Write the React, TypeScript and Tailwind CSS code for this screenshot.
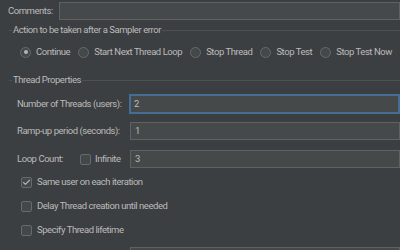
import { Check } from 'lucide-react';

const font = { fontFamily: 'Roboto, "Liberation Sans", sans-serif', letterSpacing: '-0.45px' };

function Radio({ label, checked = false }: { label: string; checked?: boolean }) {
  return (
    <div className="flex items-center gap-[5px] shrink-0">
      <span className="w-[11px] h-[11px] rounded-full border border-[#666a6c] bg-[#43494a] flex items-center justify-center">
        {checked && <span className="w-[4px] h-[4px] rounded-full bg-[#b4b4b4]" />}
      </span>
      <span className="whitespace-nowrap">{label}</span>
    </div>
  );
}

function CheckRow({ label, checked = false }: { label: string; checked?: boolean }) {
  return (
    <div className="flex items-center gap-[5px] h-[24px] pl-[21px]">
      <span className="w-[11px] h-[11px] rounded-[2px] border border-[#666a6c] bg-[#43494a] flex items-center justify-center">
        {checked && <Check size={9} strokeWidth={3} className="text-[#b4b4b4]" />}
      </span>
      <span className="whitespace-nowrap">{label}</span>
    </div>
  );
}

function Field({ value, focused = false }: { value: string; focused?: boolean }) {
  return (
    <div
      className={
        focused
          ? 'flex-1 h-[20px] bg-[#45494a] border-2 border-[#466d94] flex items-center pl-[3px]'
          : 'flex-1 h-[18px] bg-[#45494a] border border-[#5e6263] flex items-center pl-[4px]'
      }
    >
      {value}
    </div>
  );
}

function Titled({ title }: { title: string }) {
  return (
    <div className="flex items-center h-[12px] pl-[9px]">
      <span className="w-[3px] h-px bg-[#4d5153]" />
      <span className="px-px whitespace-nowrap">{title}</span>
      <span className="flex-1 h-px bg-[#4d5153]" />
    </div>
  );
}

export default function App() {
  return (
    <div className="w-[400px] h-[250px] overflow-hidden bg-[#3c3f41] text-[#bbbbbb] text-[9.5px] leading-none" style={font}>
      {/* Comments */}
      <div className="flex items-center pt-[2px] pl-[8px]">
        <span className="w-[51px] shrink-0 whitespace-nowrap">Comments:</span>
        <Field value="" />
      </div>

      {/* Action after error */}
      <div className="mt-[4px]">
        <Titled title="Action to be taken after a Sampler error" />
      </div>
      <div className="flex items-center gap-[8px] pl-[20px] mt-[9px] h-[14px]">
        <Radio label="Continue" checked />
        <Radio label="Start Next Thread Loop" />
        <Radio label="Stop Thread" />
        <Radio label="Stop Test" />
        <Radio label="Stop Test Now" />
      </div>

      {/* Thread properties */}
      <div className="mt-[15px]">
        <Titled title="Thread Properties" />
      </div>
      <div className="flex items-center pl-[17px] mt-[8px]">
        <span className="w-[112px] shrink-0 whitespace-nowrap">Number of Threads (users):</span>
        <Field value="2" focused />
      </div>
      <div className="flex items-center pl-[17px] mt-[8px]">
        <span className="w-[113px] shrink-0 whitespace-nowrap">Ramp-up period (seconds):</span>
        <Field value="1" />
      </div>
      <div className="flex items-center pl-[17px] mt-[10px]">
        <span className="w-[63px] shrink-0 whitespace-nowrap">Loop Count:</span>
        <span className="w-[11px] h-[11px] shrink-0 rounded-[2px] border border-[#666a6c] bg-[#43494a]" />
        <span className="w-[39px] shrink-0 pl-[4px] whitespace-nowrap">Infinite</span>
        <Field value="3" />
      </div>

      <div className="mt-[2px]">
        <CheckRow label="Same user on each iteration" checked />
        <CheckRow label="Delay Thread creation until needed" />
        <CheckRow label="Specify Thread lifetime" />
      </div>
      <div className="flex pl-[130px] mt-[5px]">
        <Field value="" />
      </div>
    </div>
  );
}
